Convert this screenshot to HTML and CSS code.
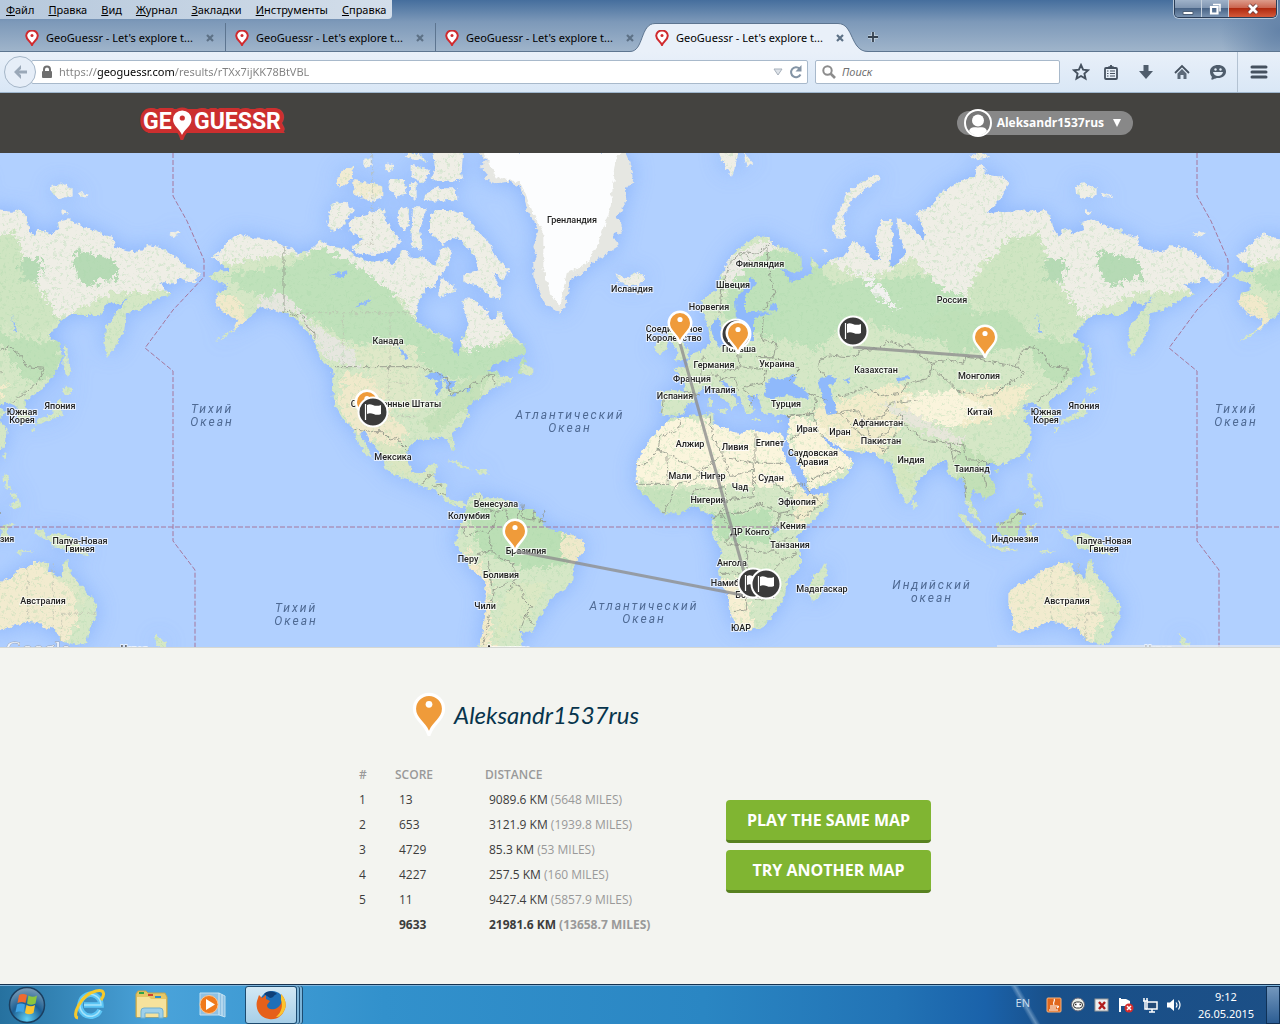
FILE: index.html
```html
<!DOCTYPE html>
<html lang="ru">
<head>
<meta charset="utf-8">
<title>GeoGuessr - Let's explore the world!</title>
<link rel="stylesheet" href="styles.css">
</head>
<body>
<svg class="defs" width="0" height="0" aria-hidden="true">
  <defs>
    <symbol id="favicon" viewBox="0 0 14 16"><path d="M7 15C5.500 11.500 1.200 9.500 1.200 5.800A5.800 5.300 0 0 1 12.800 5.800C12.800 9.500 8.500 11.500 7 15Z" fill="#fff" stroke="#d02a2e" stroke-width="2"/><circle cx="7" cy="5.500" r="1.500" fill="#d02a2e"/></symbol>
    <symbol id="close" viewBox="0 0 10 10"><path d="M2 2L8 8M8 2L2 8" stroke="#5d7186" stroke-width="2.200"/></symbol>
    <symbol id="pin" viewBox="-13 -13 26 34"><path d="M0 17C-3 10-10 7-10 0A10 10 0 0 1 10 0C10 7 3 10 0 17Z" fill="#ef9b3a" stroke="#fff" stroke-width="5" paint-order="stroke"/><circle cx="0" cy="-3.500" r="2.600" fill="#fff"/></symbol>
    <symbol id="flag" viewBox="-16 -16 32 32"><circle r="14.500" fill="#3b3b3b" stroke="#fff" stroke-width="2"/><path d="M-7.500-8V8" stroke="#fff" stroke-width="1.200"/><path d="M-6-7C-2-10 1-4 8-7V2C2 5-1-1-6 2Z" fill="#fff"/></symbol>
  </defs>
</svg>

<header class="browser">
  <div class="titlebar">
    <nav class="menubar" aria-label="Меню">
      <button><u>Ф</u>айл</button><button><u>П</u>равка</button><button><u>В</u>ид</button><button><u>Ж</u>урнал</button><button><u>З</u>акладки</button><button><u>И</u>нструменты</button><button><u>С</u>правка</button>
    </nav>
    <div class="window-buttons">
      <button class="win" aria-label="Свернуть"><svg width="12" height="12"><path d="M1 8.500H11V11.500H1Z" fill="#fff" stroke="#4e6077" stroke-width="1"/></svg></button>
      <button class="win" aria-label="Развернуть"><svg width="12" height="12"><path d="M4 1.500H11V8.500" fill="none" stroke="#fff" stroke-width="1.500"/><path d="M2 4H8.500V10.500H2Z" fill="none" stroke="#fff" stroke-width="2.200"/></svg></button>
      <button class="win win-close" aria-label="Закрыть"><svg width="12" height="12"><path d="M2 2L10 10M10 2L2 10" stroke="#6d3a3a" stroke-width="4.400"/><path d="M2 2L10 10M10 2L2 10" stroke="#fff" stroke-width="2.800"/></svg></button>
    </div>
  </div>
  <div class="tabs" role="tablist">
    <button class="tab" role="tab"><svg width="14" height="16"><use href="#favicon"/></svg><span>GeoGuessr - Let's explore t...</span><svg width="10" height="10"><use href="#close"/></svg></button>
    <button class="tab" role="tab"><svg width="14" height="16"><use href="#favicon"/></svg><span>GeoGuessr - Let's explore t...</span><svg width="10" height="10"><use href="#close"/></svg></button>
    <button class="tab last" role="tab"><svg width="14" height="16"><use href="#favicon"/></svg><span>GeoGuessr - Let's explore t...</span><svg width="10" height="10"><use href="#close"/></svg></button>
    <button class="tab active" role="tab" aria-selected="true"><svg class="tab-shape" width="240" height="29" viewBox="0 0 240 29"><path d="M0 28.500C14 28.500 10 .500 25 .500H208C224 .500 220 28.500 238 28.500V29H0Z" fill="#e9f0f9"/><path d="M0 28.500C14 28.500 10 .500 25 .500H208C224 .500 220 28.500 238 28.500" fill="none" stroke="#5d7590"/></svg><svg width="14" height="16"><use href="#favicon"/></svg><span>GeoGuessr - Let's explore t...</span><svg width="10" height="10"><use href="#close"/></svg></button>
    <button class="new-tab" aria-label="Новая вкладка"><svg width="12" height="12"><path d="M6 1V11M1 6H11" stroke="#c5d3e0" stroke-width="3.500"/><path d="M6 1V11M1 6H11" stroke="#35414f" stroke-width="1.800"/></svg></button>
  </div>
  <div class="toolbar">
    <button class="back" aria-label="Назад"><svg width="16" height="16"><path d="M9 1L2 8L9 15V11L7 9.500H15V6.500H7L9 5Z" fill="#9aa8b8"/></svg></button>
    <div class="field address">
      <svg width="12" height="14"><path d="M3 7V4.500A3 3 0 0 1 9 4.500V7" fill="none" stroke="#6f6f6f" stroke-width="2"/><rect x="1" y="6" width="10" height="7" rx="1" fill="#6f6f6f"/></svg>
      <input class="url" type="text" aria-label="Адрес" value="https://geoguessr.com/results/rTXx7ijKK78BtVBL">
      <svg width="10" height="8"><path d="M1 1H9L5 7Z" fill="#dde2e8" stroke="#a7b0bb"/></svg>
      <svg width="14" height="14"><path d="M11.500 9.500A5 5 0 1 1 10.500 3.500" fill="none" stroke="#8494a5" stroke-width="2"/><path d="M12.500 0V6.500H6.500Z" fill="#8494a5"/></svg>
    </div>
    <div class="field search">
      <svg width="14" height="14"><circle cx="5.500" cy="5.500" r="4.200" fill="none" stroke="#8c8c8c" stroke-width="2"/><path d="M8.500 8.500L13 13" stroke="#8c8c8c" stroke-width="2.600"/></svg>
      <input class="query" type="text" aria-label="Поиск" placeholder="Поиск">
    </div>
    <div class="tools">
      <button aria-label="В закладки"><svg width="18" height="18"><path d="M9 2L11.100 6.700L16.200 7.200L12.400 10.600L13.500 15.600L9 13L4.500 15.600L5.600 10.600L1.800 7.200L6.900 6.700Z" fill="none" stroke="#45515f" stroke-width="1.900"/></svg></button>
      <button class="ruled" aria-label="Закладки"><svg width="16" height="16"><rect x="2" y="4" width="12" height="11" rx="1" fill="#e7eff8" stroke="#45515f" stroke-width="1.800"/><path d="M5 4V3H6.500L8 1L9.500 3H11V4Z" fill="#45515f" stroke="#45515f"/><path d="M4 7H5.500M7 7H12M4 9.500H5.500M7 9.500H12M4 12H5.500M7 12H12" stroke="#45515f" stroke-width="1.200"/></svg></button>
      <button aria-label="Загрузки"><svg width="16" height="16"><path d="M5.500 1H10.500V7H15L8 15L1 7H5.500Z" fill="#4f5d6c"/></svg></button>
      <button aria-label="Домой"><svg width="16" height="16"><path d="M1 9L8 2L15 9" fill="none" stroke="#45515f" stroke-width="1.800"/><path d="M3.500 9.500L8 5L12.500 9.500V15H9.500V11H6.500V15H3.500Z" fill="#5d6a79"/></svg></button>
      <button aria-label="Hello"><svg width="18" height="16"><path d="M9 1C13.500 1 17 3.500 17 7.500S13.500 14 9 14C7.500 14 6 14.500 4 15.500C2 16 2 15 3 13C1.500 11.500 1 9.500 1 7.500C1 3.500 4.500 1 9 1Z" fill="#4f5d6c"/><path d="M4 8H14Q13 12 9 12T4 8" fill="#e3edf7"/><circle cx="6.500" cy="5.500" r="1.200" fill="#e3edf7"/><circle cx="11.500" cy="5.500" r="1.200" fill="#e3edf7"/></svg></button>
      <button class="burger" aria-label="Меню"><svg width="18" height="14"><path d="M2 2H16M2 7H16M2 12H16" stroke="#45515f" stroke-width="3" stroke-linecap="round"/></svg></button>
    </div>
  </div>
</header>

<header class="site-header">
  <div class="site-bar">
    <a class="logo" href="#" aria-label="GeoGuessr"><svg width="148" height="34" viewBox="139 105 148 34">
      <g class="logo-text logo-edge"><text x="143" y="128">GE</text><text x="194" y="128">GUESSR</text></g>
      <path d="M148 108H278V132H148ZM274 120L285 132H270Z" fill="#cc2f2f"/>
      <path d="M182 134C180 128 173 125 173 118.500A9.200 9 0 0 1 191.500 118.500C191.500 125 184.500 128 182 134Z" fill="#fff" stroke="#cc2f2f" stroke-width="6" paint-order="stroke"/>
      <circle cx="182.300" cy="117" r="2.600" fill="#cc2f2f"/>
      <g class="logo-text"><text x="143" y="128">GE</text><text x="194" y="128">GUESSR</text></g>
    </svg></a>
    <button class="user"><svg width="30" height="30"><circle cx="15" cy="15" r="13" fill="#777" stroke="#fff" stroke-width="2"/><circle cx="15" cy="12.500" r="6" fill="#fff"/><path d="M6 23C8 18 11 19.500 15 19.500S22 18 24 23C19 29 11 29 6 23Z" fill="#fff"/></svg><span>Aleksandr1537rus</span><svg width="8" height="8"><path d="M0 0H8L4 8Z" fill="#fff"/></svg></button>
  </div>
</header>

<main>
<section class="map" aria-label="Карта">
<svg class="map-canvas" viewBox="0 153 1280 494" preserveAspectRatio="xMidYMid slice">
<defs>
  <filter id="rough" x="0" y="0" width="100%" height="100%" color-interpolation-filters="sRGB">
    <feTurbulence type="fractalNoise" baseFrequency="0.220" numOctaves="3" seed="4" result="n"/>
    <feDisplacementMap in="SourceGraphic" in2="n" scale="6" xChannelSelector="R" yChannelSelector="G"/>
  </filter>
  <filter id="ragged" x="0" y="0" width="100%" height="100%" color-interpolation-filters="sRGB">
    <feTurbulence type="fractalNoise" baseFrequency="0.060" numOctaves="4" seed="9" result="n"/>
    <feDisplacementMap in="SourceGraphic" in2="n" scale="50" xChannelSelector="R" yChannelSelector="G"/>
  </filter>
  <filter id="speckle" x="0" y="0" width="100%" height="100%" color-interpolation-filters="sRGB">
    <feTurbulence type="fractalNoise" baseFrequency="0.100" numOctaves="4" seed="12"/>
    <feColorMatrix values="0 0 0 0 .68  0 0 0 0 .85  0 0 0 0 .68  6 0 0 0 -3.300"/>
  </filter>
  <filter id="glow" x="-5%" y="-5%" width="110%" height="110%"><feGaussianBlur stdDeviation="11"/></filter>
  <g id="shapes">
    <path d="M636 318L660 305L675 285L700 265L720 250L745 262L790 268L830 275L850 288L880 300L900 312L930 300L945 285L960 270L990 290L1035 295L1070 320L1110 335L1160 330L1175 345L1210 300L1240 325L1270 322L1305 350L1325 290L1360 300L1345 345L1315 385L1305 410L1280 415L1260 440L1248 490L1250 515L1290 540L1355 570L1360 600L1375 618L1385 570L1400 540L1405 510L1390 470L1392 445L1425 447L1435 465L1460 480L1470 508L1485 510L1500 485L1520 525L1540 560L1575 585L1578 610L1530 630L1490 640L1460 665L1490 660L1500 680L1545 682L1515 705L1480 712L1450 740L1420 755L1400 775L1405 800L1385 825L1355 850L1360 875L1366 902L1352 892L1340 865L1310 860L1285 870L1250 868L1225 892L1222 935L1240 968L1272 970L1285 945L1312 942L1302 978L1310 1000L1342 1000L1340 1040L1360 1055L1390 1055L1402 1068L1378 1068L1345 1060L1325 1042L1310 1020L1268 1012L1235 992L1190 978L1155 955L1150 925L1120 885L1095 845L1078 848L1098 885L1120 928L1098 912L1075 880L1058 835L1030 810L1010 775L998 740L1000 690L995 655L960 628L945 575L920 545L890 510L860 490L820 480L780 470L760 495L745 505L715 530L680 560L640 575L700 540L715 510L690 500L665 485L645 465L650 430L680 420L680 400L640 390L625 380L650 365L690 362L670 345L640 325Z"/>
    <g transform="translate(960 0)">
      <path d="M35 160L70 155L105 180L85 205L60 240L35 245L22 215ZM105 200L150 190L190 175L200 215L240 270L220 300L160 315L110 310L95 290L130 270L90 245L85 220ZM235 180L265 170L268 225L250 245L232 215ZM280 170L320 175L310 205L300 240L308 300L275 290L275 230ZM330 200L345 180L400 180L430 190L470 240L510 280L525 320L570 360L550 390L520 370L545 430L540 450L510 440L470 405L430 400L430 375L475 360L465 320L420 270L400 260L370 285L330 250ZM340 5H430L425 60L430 90L390 95L330 90L345 60ZM350 115L410 115L412 150L310 152L320 125ZM100 90L150 100L190 110L190 140L150 155L100 130ZM50 90L70 60L100 50L95 85L60 115ZM210 90L255 90L260 130L230 140L205 120ZM270 100H290V150L270 140ZM275 45L330 60L310 100L275 80ZM130 30L155 25V50H130ZM200 40L220 45L215 65L195 60ZM250 12L300 12L320 35L280 30ZM365 385L400 405L405 425L375 435L355 445V410ZM610 620L620 645L640 655V675L595 668L600 640Z"/>
      <path d="M890 370L915 385L955 365L978 385L960 405L920 405L895 395ZM380 932L405 930L440 950L458 958L425 955L405 938ZM465 960L490 960L508 970L480 975Z"/>
      <path d="M437 1060L455 1035L485 1028L490 1045L540 1045L575 1055L600 1080L640 1080L660 1105L675 1130L700 1140L760 1155L795 1175V1200L765 1235L760 1290L735 1320L690 1345L680 1370L645 1420L640 1445L600 1445L610 1470L600 1500H468L485 1460L495 1400L497 1340L495 1290L455 1260L430 1215L405 1185L410 1155L425 1125L437 1095Z"/>
    </g>
    <g transform="translate(1890 0)">
      <path d="M215 480V450L260 420L270 380L290 340L315 305L350 280L385 258L420 262L430 285L470 295L515 325V360L490 370L455 352L480 395L520 385L545 370L540 320L570 355L610 325L640 320L670 275L700 290L730 330L750 330L735 260L755 210L785 210L790 260L780 350L800 340L830 310L805 250L800 205L840 225L880 270L885 250L860 190L905 170L930 130L990 95V985L975 965L940 930L905 955L860 995L850 1045L830 1060L805 1020L785 940L760 935L735 910L650 905L580 860L600 890L640 905L672 940L640 985L535 1022L530 990L500 930L468 872L475 840L480 800L450 795L400 790L390 760L385 735L350 735L375 785L350 795L330 740L295 700L270 690L290 720L325 755L305 785L300 765L250 720L230 705L200 730L190 755L170 765L160 790L120 800L90 790L95 750L85 725L130 720L165 725L160 690L130 655L165 650L190 610L215 600L240 580L235 530Z"/>
      <path d="M605 240L620 200L650 130L690 100L740 70L752 85L700 125L665 150L640 200L650 265L620 262ZM265 5H325L318 40L305 80L285 50ZM340 5L370 40L350 52ZM75 595L85 570H110V600L88 614ZM108 530L132 520L150 560L175 600L178 625L130 637L145 605L120 570ZM262 778L292 776L288 794ZM235 745L246 742V770H236ZM365 805L392 808V813L365 811ZM438 815L455 810L446 820ZM585 1235L593 1270L570 1340L545 1355L538 1320L550 1275L570 1265ZM848 1050L862 1065L852 1078L846 1070ZM575 295L590 298L585 312Z"/>
      <path d="M85 840L120 803L160 800L250 790V820L330 855L360 835L400 850L450 850L462 862L450 880L478 950L505 1000L535 1035L600 1030L590 1070L530 1130L500 1160L510 1210V1255L470 1290L465 1340L440 1380L400 1430L330 1445L305 1400L290 1330L265 1270L275 1200L245 1150L250 1100L220 1085L195 1065L150 1090H100L60 1050L20 1010V940L50 880Z"/>
    </g>
    <g transform="translate(2850 0)">
      <path d="M-10 130L30 92L75 80L80 50L100 45L110 75L160 80L175 100L150 150L110 190L150 185L205 180L260 185L285 180L305 205L310 240L325 260L335 235L375 250L400 240L395 215L430 208L470 230L510 240L530 255L560 260L570 290L600 300L640 305L660 285L700 290L750 320L780 350L825 370L805 400L780 395L760 380L750 400L700 400L735 435L700 445L640 480L600 490L595 540L570 590L545 620L535 580L540 530L570 490L610 440L580 465L550 455L520 495L430 495L400 520L370 560L400 580L408 620L390 670L340 725L295 752L310 800L290 820L275 800V770L240 755L215 775L240 785L220 810L245 840L240 880L215 915L170 940L140 945L110 935L105 965L135 1000V1030L105 1050L90 1030L65 1020L60 1045L72 1075L90 1100L92 1120L70 1105L50 1060L48 1020L35 985L15 990L-10 965Z"/>
      <path d="M415 590H425V640L435 670L425 680L412 640ZM415 710L445 715L425 735L405 730ZM405 745L410 795L370 810L330 825L335 810L380 790L398 750ZM315 830L328 835L318 850ZM232 915L242 908L238 935ZM135 960H150L140 970ZM232 970L248 975L245 1005L262 1025L235 1008ZM250 1032L270 1030L275 1045L255 1048ZM250 1062L280 1045L282 1075L260 1075ZM137 1120L160 1118L205 1075L218 1085L210 1130L200 1165L150 1155ZM20 1085L50 1105L85 1140L108 1160L105 1178L80 1165L50 1130ZM108 1185L160 1190L205 1200L150 1202ZM225 1130L270 1120L240 1140L255 1170L230 1172ZM275 1200L320 1205L275 1212ZM325 1140H350L360 1160L400 1148L450 1170L490 1218L440 1205L380 1190L370 1170L340 1160Z"/>
      <path d="M175 1330L200 1305L250 1285L285 1255L310 1250L325 1235L370 1240L365 1260L405 1283L415 1230L425 1228L435 1270L460 1300L510 1360L512 1400L490 1440L480 1480L450 1485L410 1475L380 1430L360 1440L340 1420L300 1415L260 1430L205 1450L185 1440L190 1400L175 1360ZM685 1450L705 1470L725 1480L700 1500ZM730 255L745 242L765 250L740 262ZM375 110L400 100L440 115V135L400 148L378 130ZM455 125L490 138L460 140ZM405 180L430 188L410 195ZM55 22L90 5L120 22L80 28Z"/>
    </g>
  </g>
  <path id="greenland" d="M1435 5L1460 30L1440 50L1460 70L1455 90L1485 100L1530 95L1560 110L1575 150L1580 180L1600 210L1615 240L1600 290L1610 320L1600 340V380L1615 420L1635 460L1670 485L1685 488L1695 460L1705 425L1715 385L1750 370L1780 335L1815 315L1855 290L1840 255L1870 240L1850 200L1880 160L1875 120L1900 90L1890 40L1875 5Z"/>
  <mask id="landmask" maskUnits="userSpaceOnUse" x="0" y="0" width="3900" height="1500"><use href="#shapes" fill="#fff"/></mask>
  <g id="world" transform="translate(0 150) scale(.33333)">
    <g mask="url(#landmask)">
      <rect width="3900" height="1500" fill="#d5e7c6"/>
      <rect width="3900" height="240" fill="#efeee6"/>
      <path d="M1300 160H1600V480H1400L1290 400ZM2480 60H2660L2600 280H2480ZM1830 350H1960V420H1830Z" fill="#efeee6"/>
      <path d="M1290 170L1330 170L1320 260H1285ZM990 50H1160V160H990Z" fill="#f1ebd3"/>
      <g filter="url(#ragged)">
        <path d="M600 140H1700V430L1560 540L1470 590L1400 600L1385 470L1240 500L1200 440L1080 380L1010 330L960 300L640 345Z" fill="#efeee6"/>
        <path d="M960 290L1060 340L1180 430L1250 520L1390 600L1600 570L1570 660L1380 690L1290 660L1190 560L1070 590L960 520L850 450L720 420L680 370L860 350Z" fill="#bfe1ba"/>
        <path d="M1400 480L1480 520L1470 580L1420 600Z" fill="#efeee6"/>
        <path d="M640 430L720 450L740 530L640 560Z" fill="#f1e9cb"/>
        <path d="M780 440L850 430L960 540L1060 600L1080 660L980 620L880 480L780 500Z" fill="#e6e6df"/>
        <path d="M1040 660L1140 700L1170 800L1230 850L1180 900L1080 860L1010 760Z" fill="#f0e9cb"/>
        <path d="M1050 590L1250 590L1270 780L1180 780Z" fill="#dfe8c8"/>
        <path d="M1380 700L1480 660L1430 760L1300 850L1260 820Z" fill="#c6e1ba"/>
        <path d="M1120 870L1230 900L1290 980L1180 970Z" fill="#dbe6c2"/>
        <path d="M1390 1070L1580 1060L1720 1130L1700 1240L1590 1260L1450 1210Z" fill="#bbdfb5"/>
        <path d="M1690 1140L1770 1170L1740 1260L1680 1210Z" fill="#efe9ca"/>
        <path d="M1400 1190L1470 1290L1480 1500H1440Z" fill="#f3eacb"/>
        <path d="M1530 1300L1640 1300L1590 1400L1480 1480Z" fill="#dbe8c4"/>
        <path d="M2180 420L2160 330L2300 270L2340 290L2240 340L2200 450Z" fill="#ecebe4"/>
        <path d="M2190 400L2300 310L2420 310L2500 400L2860 370L2960 560L2760 570L2560 500L2450 600L2170 520Z" fill="#bfe1ba"/>
        <path d="M2430 240L2500 350L2620 380L2740 320L2820 410L2900 440L2950 330H3140L3120 480L3250 510L3400 430L3700 420V200L3400 170L3000 0L2600 0V200Z" fill="#efeee6"/>
        <path d="M2570 360L2650 410L2700 480L2650 460Z" fill="#f2f1f0"/>
        <path d="M3030 260L3120 250L3160 370L3250 510L3190 560L2950 490L2900 420Z" fill="#cfe5c2"/>
        <path d="M3300 300L3420 330L3430 380L3330 410L3290 350ZM3130 330L3200 330L3190 400L3140 390Z" fill="#b6dab5"/>
        <path d="M2780 500L3020 480L3100 560L3260 580L3250 680L3150 700L3080 590L2850 610Z" fill="#bfe0b8"/>
        <path d="M1880 870L2040 800L2360 850L2420 1010L2230 1010L1900 1000Z" fill="#fbf5dd"/>
        <path d="M2350 790L2520 840L2570 940L2430 1020Z" fill="#fbf4db"/>
        <path d="M2430 780L2690 700L2760 740L3100 700L3040 790L2900 830L2730 780L2640 920L2480 860Z" fill="#f3eccc"/>
        <path d="M2700 740L2850 720L2980 780L2850 830L2730 790Z" fill="#faf4dc"/>
        <path d="M2630 760L2680 760L2900 870L2880 890L2760 840Z" fill="#e7e6da"/>
        <path d="M2660 850L2760 900L2720 960L2830 1080L2700 1000Z" fill="#d4e6bf"/>
        <path d="M2880 880L3000 950L3000 1180L2860 1000ZM2960 1060L3100 1070L3060 1180L2960 1180Z" fill="#c3e0b7"/>
        <path d="M1880 1010L2100 1030L2110 1100L1980 1090Z" fill="#c6e2bc"/>
        <path d="M2130 1090L2320 1080L2310 1180L2160 1170Z" fill="#badfb5"/>
        <path d="M2380 1010L2490 1030L2390 1140Z" fill="#f3edce"/>
        <path d="M2150 1290L2230 1290L2260 1440L2160 1430Z" fill="#f7efd3"/>
        <path d="M3000 1200L3280 1260L3310 1400L3260 1500L3000 1450Z" fill="#f2ebcf"/>
        <path d="M3160 1220L3280 1240L3330 1380L3260 1300Z" fill="#dde8c7"/>
      </g>
      <rect width="3900" height="1500" filter="url(#speckle)" opacity=".350"/>
    </g>
    <use href="#greenland" fill="#e6e7e2"/>
    <path d="M1450 5L1490 85L1560 95L1600 190L1630 240L1630 350L1650 430L1680 470L1700 370L1760 340L1790 290L1830 180L1850 20L1870 5Z" fill="#fcfdfe"/>
    <g fill="#8fb9fb">
      <path d="M2130 530L2155 500L2165 545L2185 570L2210 545L2205 450L2230 420L2255 380L2272 400L2235 440V485L2320 488L2262 505V572L2190 592L2150 585Z"/>
      <path d="M2295 742L2300 700L2320 680L2345 690L2390 668L2380 700L2425 730L2430 748L2360 735L2315 748ZM2455 690L2490 675L2510 690L2485 710L2500 740L2512 790L2480 795L2470 750ZM2535 690L2550 685L2545 705ZM2690 685L2730 678L2728 685L2695 695ZM2315 460L2335 465L2330 485L2312 480Z"/>
      <path d="M1270 680L1310 665L1345 685L1320 690ZM1308 700L1325 690L1320 735L1308 738ZM1332 690L1370 695L1355 720L1340 715ZM1345 738L1375 728L1365 740ZM1380 722L1410 714L1405 724ZM1200 590L1225 620L1220 630L1200 605ZM1060 470L1115 445L1100 462ZM990 375L1045 360L1025 385ZM3108 490L3115 520L3125 550L3116 545ZM2315 1130L2335 1130L2330 1150L2318 1148Z"/>
    </g>
    <g class="borders">
      <path d="M852 290V485L870 485L885 500L905 490L925 535L945 550V570M1005 650H1245L1290 660L1345 690L1350 735L1400 718L1420 700L1440 700L1460 672L1480 675L1485 705M1060 835L1115 845L1145 845L1170 870L1190 865L1225 902M1268 1000L1282 980L1300 975M1300 1010L1330 1005M1320 1030L1340 1035"/>
      <path d="M1440 1035L1435 1070L1485 1085L1490 1110L1465 1150L1475 1200L1430 1215M1485 1085L1520 1080L1525 1120L1550 1115L1560 1080M1570 1060L1565 1105L1600 1110L1605 1080M1635 1080L1620 1115L1640 1115M1385 1130L1400 1160L1440 1140L1460 1150M1475 1200L1500 1225L1540 1240L1545 1290L1480 1320L1470 1380L1450 1490M1465 1230L1475 1310M1520 1325L1540 1300L1565 1310L1570 1345L1595 1370L1575 1400L1560 1440M1575 1395L1600 1425"/>
      <path d="M2160 490L2165 420L2190 340L2230 305L2260 345M2230 305L2275 310L2310 280M2300 290L2310 380L2325 430L2290 480M2290 500L2285 570L2330 580L2325 620L2270 620M2110 620L2105 680L2150 670L2160 690L2205 680L2215 720M2215 600L2220 650L2165 665M2050 725L2100 735M1990 745L1985 790M2220 650L2300 660L2290 700L2230 710M2280 620L2340 630L2400 660L2370 690M2230 720L2260 740L2250 770M2425 730L2450 740L2440 790L2360 800M2450 740L2480 750"/>
      <path d="M2475 680L2455 650L2460 630L2490 615L2540 620L2575 615L2580 600L2640 595L2660 570L2710 590L2730 580L2750 610L2800 640L2780 690L2720 700L2700 730L2640 740L2600 710L2540 735L2510 740M2780 640L2850 630L2890 640L2895 620L2950 630L3050 650L3065 605L3100 590L3140 620L3150 650L3205 655L3190 690L3145 730L3110 755M3050 650L3075 670L3010 710L2990 730L2950 740L2870 720L2850 700L2800 655"/>
      <path d="M2510 790L2570 780L2600 810L2650 800L2670 760L2750 750M2520 790L2555 830L2650 900M2600 810L2610 870L2660 850L2700 790L2720 830L2770 870L2850 880L2860 930L2880 910L2840 890M2650 910L2690 850M2360 800L2440 790L2450 840L2480 870M2370 870L2430 830M2420 1000L2450 980L2530 950M2850 880L2890 880L2900 930L2930 930L2970 940M2890 980L2900 1040M2930 930L2950 970L2960 1010M3000 1120L3035 1115L3050 1090L3075 1090"/>
      <path d="M2040 810L2035 840L1980 860L1975 900L2000 910L2100 965L2170 910L2140 870L2130 800M1975 900L1940 940L1910 945M2000 910L2005 1000L1960 1000L1910 1000M2100 965L2090 990L2030 1000L2010 1050L1990 1090M2170 920L2190 980L2260 960L2260 940L2190 925M2265 850V940H2350M2260 960V1040L2180 1050L2170 1010L2080 1020L2080 1060M2180 1050L2160 1090L2220 1090L2280 1060L2340 1090L2380 1080L2370 1030L2320 1000M2370 1010L2410 1000L2440 1040L2470 1060L2410 1100L2350 1095M2340 1090L2330 1130L2310 1160L2320 1200L2290 1210L2240 1190L2240 1270H2160M2320 1200L2350 1230L2390 1210M2350 1230L2310 1270L2240 1270V1380L2200 1385M2310 1270L2340 1310L2290 1350L2240 1340M2330 1180L2380 1160M2130 1110L2160 1090L2200 1150L2170 1180L2240 1190"/>
    </g>
    <g class="state-lines"><path d="M1118 10V283H1070M900 488H1240M1030 490V650M1170 490V650M1165 650V760H1060M1165 700H1230M1165 760H1260M1165 800H1250M3155 1255V1415M3232 1240V1430M3257 1390H3360M3257 1390V1480"/></g>
  </g>
  <g id="dateline"><path d="M173 153V196L187 221L204 260V277L173 310L145 348L173 371V541L195 570V647"/></g>
</defs>
<rect y="153" width="1280" height="494" fill="#b1d0ff"/>
<g filter="url(#glow)" opacity=".650" fill="#76a5fa">
  <g transform="translate(0 150) scale(.33333)"><use href="#shapes"/><use href="#greenland"/></g>
  <g transform="translate(-1024 150) scale(.33333)"><use href="#shapes"/></g>
  <g transform="translate(1024 150) scale(.33333)"><use href="#shapes"/></g>
</g>
<g filter="url(#rough)"><use href="#world"/><use href="#world" x="-1024"/><use href="#world" x="1024"/></g>
<g class="dashes"><path d="M0 527H1280"/><use href="#dateline"/><use href="#dateline" x="1024"/></g>
<g class="country">
  <text x="572" y="223">Гренландия</text><text x="632" y="292">Исландия</text><text x="388" y="344">Канада</text><text x="396" y="407">Соединенные Штаты</text><text x="393" y="460">Мексика</text><text x="496" y="507">Венесуэла</text><text x="469" y="519">Колумбия</text><text x="468" y="562">Перу</text><text x="501" y="578">Боливия</text><text x="485" y="609">Чили</text><text x="526" y="554">Бразилия</text><text x="508" y="652">Аргентина</text>
  <text x="760" y="267">Финляндия</text><text x="733" y="288">Швеция</text><text x="709" y="310">Норвегия</text><text x="674" y="332">Соединенное</text><text x="674" y="341">Королевство</text><text x="739" y="352">Польша</text><text x="714" y="368">Германия</text><text x="777" y="367">Украина</text><text x="692" y="382">Франция</text><text x="720" y="393">Италия</text><text x="675" y="399">Испания</text><text x="786" y="407">Турция</text><text x="807" y="432">Ирак</text><text x="840" y="435">Иран</text><text x="878" y="426">Афганистан</text><text x="881" y="444">Пакистан</text><text x="876" y="373">Казахстан</text><text x="952" y="303">Россия</text>
  <text x="690" y="447">Алжир</text><text x="735" y="450">Ливия</text><text x="770" y="446">Египет</text><text x="813" y="456">Саудовская</text><text x="813" y="465">Аравия</text><text x="680" y="479">Мали</text><text x="713" y="479">Нигер</text><text x="740" y="490">Чад</text><text x="771" y="481">Судан</text><text x="708" y="503">Нигерия</text><text x="797" y="505">Эфиопия</text><text x="793" y="529">Кения</text><text x="750" y="535">ДР Конго</text><text x="790" y="548">Танзания</text><text x="732" y="566">Ангола</text><text x="730" y="586">Намибия</text><text x="755" y="598">Ботсвана</text><text x="822" y="592">Мадагаскар</text><text x="741" y="631">ЮАР</text>
  <text x="911" y="463">Индия</text><text x="972" y="472">Таиланд</text><text x="980" y="415">Китай</text><text x="979" y="379">Монголия</text><text x="1046" y="415">Южная</text><text x="1046" y="423">Корея</text><text x="1084" y="409">Япония</text><text x="1015" y="542">Индонезия</text><text x="1104" y="544">Папуа-Новая</text><text x="1104" y="552">Гвинея</text><text x="1067" y="604">Австралия</text><text x="1158" y="652">Новая</text>
  <text x="22" y="415">Южная</text><text x="22" y="423">Корея</text><text x="60" y="409">Япония</text><text x="7" y="542">зия</text><text x="80" y="544">Папуа-Новая</text><text x="80" y="552">Гвинея</text><text x="43" y="604">Австралия</text><text x="134" y="652">Новая</text>
</g>
<g class="ocean">
  <text x="212" y="413">Тихий</text><text x="212" y="426">Океан</text><text x="1236" y="413">Тихий</text><text x="1236" y="426">Океан</text><text x="296" y="612">Тихий</text><text x="296" y="625">Океан</text><text x="570" y="419">Атлантический</text><text x="570" y="432">Океан</text><text x="644" y="610">Атлантический</text><text x="644" y="623">Океан</text><text x="932" y="589">Индийский</text><text x="932" y="602">океан</text>
</g>
<text class="google" x="6" y="656">Google</text>
<path d="M997 646H1280" stroke="#e8edf2" stroke-width="2" opacity=".700"/>
<g class="guess-lines"><path d="M680 343L749 590M515 551L742 595M853 347L985 357"/></g>
<use href="#pin" x="354" y="389" width="26" height="34"/><use href="#flag" x="357" y="396" width="32" height="32"/>
<use href="#flag" x="720" y="318" width="32" height="32"/><use href="#pin" x="725" y="320" width="26" height="34"/>
<use href="#pin" x="667" y="310" width="26" height="34"/><use href="#pin" x="972" y="324" width="26" height="34"/><use href="#pin" x="502" y="518" width="26" height="34"/>
<use href="#flag" x="837" y="315" width="32" height="32"/><use href="#flag" x="737" y="567" width="32" height="32"/><use href="#flag" x="750" y="568" width="32" height="32"/>
</svg>
</section>

<section class="results">
  <h1 class="player"><svg width="34" height="44"><use href="#pin" width="34" height="44"/></svg><span>Aleksandr1537rus</span></h1>
  <div class="columns">
    <table class="scores">
      <thead><tr><th class="num">#</th><th class="pts">SCORE</th><th>DISTANCE</th></tr></thead>
      <tbody>
        <tr><td>1</td><td>13</td><td>9089.6 KM <span>(5648 MILES)</span></td></tr>
        <tr><td>2</td><td>653</td><td>3121.9 KM <span>(1939.8 MILES)</span></td></tr>
        <tr><td>3</td><td>4729</td><td>85.3 KM <span>(53 MILES)</span></td></tr>
        <tr><td>4</td><td>4227</td><td>257.5 KM <span>(160 MILES)</span></td></tr>
        <tr><td>5</td><td>11</td><td>9427.4 KM <span>(5857.9 MILES)</span></td></tr>
        <tr class="total"><td></td><td>9633</td><td>21981.6 KM <span>(13658.7 MILES)</span></td></tr>
      </tbody>
    </table>
    <div class="actions"><button>PLAY THE SAME MAP</button><button>TRY ANOTHER MAP</button></div>
  </div>
</section>
</main>

<footer class="taskbar">
  <button class="start" aria-label="Пуск"><svg width="40" height="38" viewBox="0 0 40 38"><defs><radialGradient id="orb" cx=".5" cy=".9" r=".9"><stop offset="0" stop-color="#5fd0f5"/><stop offset=".5" stop-color="#1c5f94"/><stop offset="1" stop-color="#7f9fb8"/></radialGradient></defs><circle cx="20" cy="19" r="17.500" fill="url(#orb)" stroke="#1b3f60" stroke-width="1.500"/><path d="M12 9Q16 7 20 9L18.500 17Q14.500 15 10.500 17Z" fill="#ee6a30"/><path d="M21.500 9.500Q26 12 30 9.500L28.500 17.500Q24 20 20 17.500Z" fill="#8cc63e"/><path d="M10 18.500Q14 16.500 18 18.500L16.500 26.500Q12.500 24.500 8.500 26.500Z" fill="#3fa3e6"/><path d="M19.500 19Q24 21.500 28 19L26.500 27Q22 29.500 18 27Z" fill="#fcc52e"/></svg></button>
  <button class="app" aria-label="Internet Explorer"><svg width="36" height="36" viewBox="0 0 36 36"><path d="M28 23A10.500 11 0 1 1 29 18H12" fill="none" stroke="#5cc5f5" stroke-width="5.500"/><path d="M28 23A10.500 11 0 1 1 29 18H12" fill="none" stroke="#a5e4fb" stroke-width="1.500"/><path d="M6 31C-1 30 8 8 24 4C33 2 33 8 29 13" fill="none" stroke="#f6c92b" stroke-width="3"/></svg></button>
  <button class="app" aria-label="Проводник"><svg width="36" height="32" viewBox="0 0 36 32"><path d="M2 5L4 2H12L14 4H31L33 8V28H2Z" fill="#e5c766" stroke="#c7a548"/><path d="M5 3H10V5H5Z" fill="#2ea34a"/><path d="M14 5H19V7H14Z" fill="#d0442e"/><path d="M21 7H27V9H21Z" fill="#2c8ecb"/><path d="M3 8H15L17 10H32V28H3Z" fill="#f6e29c"/><path d="M7 29V22Q7 19 10 19H26Q29 19 29 22V29H25V24H11V29Z" fill="#9ed0ea" stroke="#6fb0d4"/></svg></button>
  <button class="app media" aria-label="Проигрыватель"><svg width="32" height="30" viewBox="0 0 32 30"><path d="M3 3H22L28 6V27L22 25H3Z" fill="#8fc1e3" stroke="#bfe0f2"/><path d="M22 3V25M25 4.500V26" stroke="#d5ecf8"/><circle cx="12" cy="14.500" r="9" fill="#f07a1c" stroke="#ffc58f"/><path d="M9 9L18 14.500L9 20Z" fill="#fff"/></svg></button>
  <button class="app running" aria-label="Firefox"><svg width="32" height="32" viewBox="0 0 32 32"><circle cx="17" cy="14.500" r="12.500" fill="#1e6fb8"/><path d="M9 5C13 1 19 2 22 5C18 6 19 9 15 9Z" fill="#0e3f78"/><path d="M26 5C31 10 32 17 29 22C26 29 19 31 14 30C5 29 0 20 2 12L4 6L7 9L11 6L11 10L15 12L12 16C12 21 19 21 22 19C27 16 28 10 26 5Z" fill="#e6601a"/><path d="M26 5C31 10 32 17 29 22C27 26 24 28 21 28C27 23 28 16 26 11Z" fill="#fbc530"/></svg></button>
  <div class="tray">
    <span class="lang">EN</span>
    <svg width="16" height="16"><rect x="1" y="1" width="14" height="14" rx="1" fill="#e0681d" stroke="#f6b27e"/><path d="M8 2C10 4 6 5 8 8M4 9H11Q14 9 11 11M4 11H10M3 13H12" fill="none" stroke="#fff" stroke-width="1.200"/></svg>
    <svg width="16" height="16"><circle cx="8" cy="7.500" r="6.500" fill="#e8ede6" stroke="#667"/><rect x="3.500" y="5" width="9" height="6" rx="3" fill="#fff" stroke="#333"/><path d="M5 7.500H6.500M9.500 7.500H11" stroke="#333" stroke-width="1.500"/></svg>
    <svg width="16" height="16"><rect x="1" y="2" width="13" height="12" fill="#eceef0" stroke="#999"/><path d="M5 5L11 12M11 5L5 12" stroke="#b11d1d" stroke-width="2.400"/></svg>
    <svg width="16" height="16"><path d="M2 1V15" stroke="#fff" stroke-width="2"/><path d="M3 2H8L12 4V9H3Z" fill="#fff"/><circle cx="11" cy="11" r="4.500" fill="#d52b2b"/><path d="M9 9L13 13M13 9L9 13" stroke="#fff" stroke-width="1.500"/></svg>
    <svg width="16" height="16"><rect x="5" y="5" width="10" height="7" fill="#234b78" stroke="#fff" stroke-width="1.500"/><path d="M7 15H13M10 12V15M2 1V4M5 1V4M1 4H6M3 4V12H5" stroke="#fff" stroke-width="1.500" fill="none"/></svg>
    <svg width="16" height="16"><path d="M1 5.500H4L8 2V14L4 10.500H1Z" fill="#fff"/><path d="M10 5.500Q12 8 10 10.500M12.500 3.500Q15.500 8 12.500 12.500" fill="none" stroke="#fff" stroke-width="1.200"/></svg>
    <div class="clock"><time>9:12</time><time>26.05.2015</time></div>
  </div>
  <button class="show-desktop" aria-label="Свернуть все окна"></button>
</footer>
</body>
</html>
```
FILE: styles.css
```css
* { box-sizing: border-box; }
body {
  margin: 0;
  min-height: 100vh;
  display: flex;
  flex-direction: column;
  font-family: "Open Sans", sans-serif;
  font-size: 12px;
  line-height: 16px;
  background: #f3f4f0;
  color: #3c3c3c;
}
button { font: inherit; color: inherit; background: none; border: 0; padding: 0; margin: 0; }
svg { display: block; flex: none; }
.defs { position: absolute; }

/* browser window */
.browser {
  flex: none;
  font-family: "Noto Sans", sans-serif;
  font-size: 11px;
  color: #000;
  background:
    radial-gradient(ellipse 60px 60px at 100% 30px, #6483a8 0, transparent 100%),
    linear-gradient(#456e9d 0, #7d99b9 22px, #a0b5cb 52px);
}
.titlebar, .tabs { display: flex; }
.titlebar { height: 23px; justify-content: space-between; align-items: flex-start; }
.menubar {
  display: flex;
  gap: 14px;
  height: 19px;
  padding: 2px 6px;
  background: linear-gradient(90deg, #b6c8dc, #d3deea);
  border-radius: 0 0 4px 0;
}
.window-buttons {
  display: flex;
  margin-right: 3px;
  border: 1px solid #2a3d57;
  border-top: 0;
  border-radius: 0 0 5px 5px;
  overflow: hidden;
  box-shadow: 0 0 0 1px #b5c6d8;
}
.win {
  width: 27px;
  height: 17px;
  display: grid;
  place-items: center;
  background: linear-gradient(#9fb2c9 0, #7d93af 50%, #4a6587 50%, #7892b0 100%);
  border-right: 1px solid #c4d0dd;
}
.win-close { width: 47px; border: 0; background: linear-gradient(#dd9c8b 0, #c9604a 50%, #b02a10 50%, #d4593a 100%); }
.tabs { height: 29px; padding-left: 16px; border-bottom: 1px solid #5d7590; }
.tab {
  position: relative;
  flex: 0 1 210px;
  min-width: 0;
  display: flex;
  align-items: center;
  gap: 7px;
  padding: 1px 10px 0 9px;
  border-right: 1px solid #5d7590;
}
.tab span { flex: 1; text-align: left; white-space: nowrap; }
.tab > * { position: relative; }
.tab.last, .tab.active { border-color: transparent; }
.tab .tab-shape { position: absolute; left: -16px; top: 0; }
.new-tab { padding: 0 11px; }
.toolbar {
  display: flex;
  align-items: center;
  height: 41px;
  padding: 0 4px;
  background: linear-gradient(#e9f0f9, #d9e7f6);
  border-bottom: 1px solid #9fb6cd;
}
.back {
  position: relative;
  width: 32px;
  height: 32px;
  display: grid;
  place-items: center;
  border: 1px solid #a5b6c8;
  border-radius: 50%;
  background: #e6eef8;
}
.field {
  display: flex;
  align-items: center;
  height: 24px;
  background: #fff;
  border: 1px solid #a8b9cb;
  border-radius: 2px;
}
.address { flex: 1; gap: 6px; margin-left: -5px; padding: 0 4px 0 9px; }
.search { flex: 0 1 245px; margin-left: 7px; gap: 6px; padding: 0 6px; }
.field input { flex: 1; min-width: 0; border: 0; padding: 0; outline: 0; background: transparent; font: inherit; color: #808080; }
.field .url {
  background: linear-gradient(90deg, #808080 38px, #000 38px, #000 115px, #808080 115px);
  background-clip: text;
  -webkit-text-fill-color: transparent;
}
.query::placeholder { font-style: italic; color: #707070; opacity: 1; }
.tools { display: flex; align-items: center; align-self: stretch; margin-left: 8px; }
.tools button { width: 36px; height: 100%; display: grid; place-items: center; }
.tools button:first-child { width: 26px; }
.tools .ruled { width: 34px; }
.tools .burger { width: 43px; margin-left: 1px; margin-right: -4px; border-left: 1px solid #b3c2d2; }

/* site */
.site-header { flex: none; background: #444340; padding: 0 20px; }
.site-bar { max-width: 1000px; height: 60px; margin: 0 auto; padding-right: 7px; display: flex; justify-content: space-between; align-items: center; }
.logo { margin-left: -1px; }
.logo-text { font: 700 23px Roboto, sans-serif; fill: #fff; }
.logo-edge { stroke: #cc2f2f; stroke-width: 8px; stroke-linejoin: round; }
.user {
  display: flex;
  align-items: center;
  gap: 4px;
  height: 24px;
  padding: 0 12px 0 6px;
  border-radius: 12px;
  background: #888;
  color: #fff;
  font-weight: 700;
}
.user span { margin-right: 5px; }
main { flex: 1; display: flex; flex-direction: column; }
.map { height: 494px; box-shadow: 0 1px #d5d7d3; }
.map-canvas { width: 100%; height: 100%; }
.borders { fill: none; stroke: #8f9488; stroke-width: 2.500px; }
.state-lines { fill: none; stroke: #b9beae; stroke-width: 2px; stroke-dasharray: 12 6; }
.dashes { fill: none; stroke: #a5779c; stroke-width: 1px; stroke-dasharray: 5 2; }
.country { font: 500 9px Roboto, sans-serif; text-anchor: middle; fill: #222; stroke: #fff; stroke-opacity: .7; stroke-width: 2px; paint-order: stroke; }
.ocean { font: italic 400 12px Roboto, sans-serif; letter-spacing: 2px; text-anchor: middle; fill: #4f6a94; }
.google { font: 22px "Liberation Serif", serif; fill: #fff; opacity: .8; stroke: #999; stroke-width: 1px; paint-order: stroke; }
.guess-lines { fill: none; stroke: #8e8e8e; stroke-width: 3px; opacity: .8; }

.results { width: 100%; max-width: 582px; margin: 0 auto; padding: 45px 0 40px 10px; }
.player { display: flex; align-items: center; gap: 8px; height: 44px; margin: 0 0 30px 53px; color: #07344c; font: italic 400 24px Lato, sans-serif; }
.columns { display: grid; grid-template-columns: 1fr 205px; }
.scores { width: 100%; border-collapse: collapse; }
.scores th { height: 21px; padding: 1px 0 0; text-align: left; vertical-align: top; font-weight: 600; color: #999; }
.scores .num { width: 36px; }
.scores .pts { width: 90px; }
.scores td { height: 25px; padding: 0 0 0 4px; white-space: nowrap; }
.scores td:first-child { padding: 0; }
.scores span { color: #999; }
.total { font-weight: 700; }
.actions { display: flex; flex-direction: column; gap: 7px; padding-top: 34px; }
.actions button {
  height: 43px;
  padding-bottom: 1px;
  border-radius: 4px;
  border-bottom: 3px solid #57811f;
  background: #80b532;
  color: #fff;
  font-size: 16px;
  font-weight: 700;
}

/* desktop taskbar */
.taskbar {
  flex: none;
  display: flex;
  align-items: center;
  height: 40px;
  padding-left: 7px;
  border-top: 1px solid #16324f;
  box-shadow: inset 0 1px #7fb5dc;
  background:
    linear-gradient(60deg, transparent 0, transparent 46%, #9fc0dd88 50%, transparent 54%) calc(100% - 210px) 0 / 90px 100% no-repeat,
    linear-gradient(90deg, #26719f 0, #4aa3da 12%, #3291cc 30%, #2a86c3 55%, #2273b5 70%, #1a62aa 77%, #19508a 82%, #1c4f86 100%);
}
.app { width: 62px; height: 38px; display: grid; place-items: center; }
.start { margin-right: 12px; }
.media { width: 59px; }
.running { width: 52px; margin-left: 3px; background: linear-gradient(#d2e8f5, #a7cfe8); border: 1px solid #1c4b70; border-radius: 3px; box-shadow: 2px 0 #7db4d8, 3px 0 #1c4b70, 5px 0 #7db4d8, 6px 0 #1c4b70; }
.tray {
  flex: 1;
  align-self: stretch;
  display: flex;
  align-items: center;
  justify-content: flex-end;
  gap: 8px;
  color: #fff;
  font-family: "Noto Sans", sans-serif;
  font-size: 11px;
}
.lang { margin: 0 8px 4px 0; color: #c9dcee; }
.clock { display: flex; flex-direction: column; align-items: center; width: 64px; margin: 0 8px 0 4px; }
.clock time { line-height: 17px; }
.show-desktop { width: 14px; height: 38px; border: 1px solid #0f3156; background: linear-gradient(#7397bd, #2c5d93); }
```
